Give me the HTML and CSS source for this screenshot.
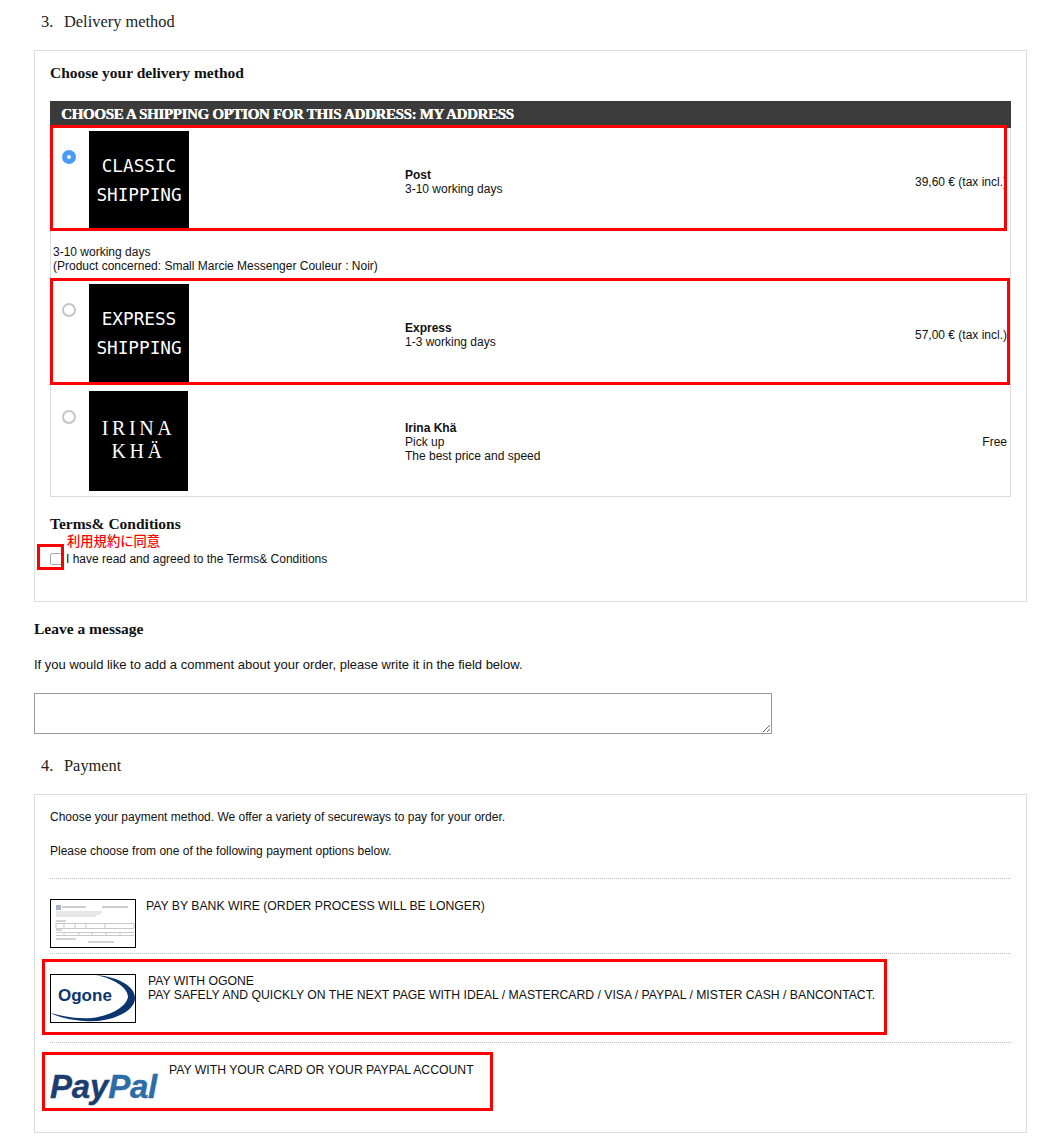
FILE: index.html
```html
<!DOCTYPE html>
<html lang="en">
<head>
<meta charset="utf-8">
<title>Checkout</title>
<link rel="stylesheet" href="styles.css">
</head>
<body>
<main class="page">
  <h2 class="step step-first"><span class="step-num">3.</span>Delivery method</h2>
  <section class="panel panel-delivery">
    <h3 class="title">Choose your delivery method</h3>
    <div class="bar">CHOOSE A SHIPPING OPTION FOR THIS ADDRESS: MY ADDRESS</div>
    <div class="list">
      <div class="option">
        <input class="radio" type="radio" name="ship" checked>
        <div class="thumb thumb-mono"><span>CLASSIC</span><span>SHIPPING</span></div>
        <div class="desc"><strong>Post</strong><span>3-10 working days</span></div>
        <div class="price">39,60 € (tax incl.)</div>
        <div class="mark mark-classic"></div>
      </div>
      <div class="note">3-10 working days<br>(Product concerned: Small Marcie Messenger Couleur : Noir)</div>
      <div class="option">
        <input class="radio" type="radio" name="ship">
        <div class="thumb thumb-mono"><span>EXPRESS</span><span>SHIPPING</span></div>
        <div class="desc"><strong>Express</strong><span>1-3 working days</span></div>
        <div class="price">57,00 € (tax incl.)</div>
        <div class="mark mark-express"></div>
      </div>
      <div class="option">
        <input class="radio" type="radio" name="ship">
        <div class="thumb thumb-serif"><span>IRINA</span><span>KHÄ</span></div>
        <div class="desc"><strong>Irina Khä</strong><span>Pick up</span><span>The best price and speed</span></div>
        <div class="price">Free</div>
      </div>
    </div>
    <h3 class="title title-terms">Terms&amp; Conditions</h3>
    <div class="terms">
      <input class="check" type="checkbox">
      <span>I have read and agreed to the Terms&amp; Conditions</span>
      <span class="jp">利用規約に同意</span>
      <div class="mark mark-check"></div>
    </div>
  </section>

  <h3 class="title title-message">Leave a message</h3>
  <p class="lead">If you would like to add a comment about your order, please write it in the field below.</p>
  <textarea class="comment"></textarea>

  <h2 class="step"><span class="step-num">4.</span>Payment</h2>
  <section class="panel panel-payment">
    <p class="pay-text">Choose your payment method. We offer a variety of secureways to pay for your order.</p>
    <p class="pay-text pay-text-second">Please choose from one of the following payment options below.</p>
    <div class="pay-row pay-bank">
      <svg class="pay-img" width="86" height="49" viewBox="0 0 86 49">
        <rect x=".5" y=".5" width="85" height="48" fill="#fff" stroke="#000"/>
        <rect x="6" y="6" width="5" height="5" fill="#aab0cc"/>
        <path d="M12 8h24M52 8h26" stroke="#999" stroke-width="1"/>
        <path d="M6 13h46M6 15h44M6 17h40" stroke="#ccc" stroke-width="1"/>
        <path d="M6 24.500h78M6 29.500h78M6 33.500h78M6 36.500h78M6 24v5M14 24v5M25 24v5M36 24v5M55 24v5M84 24v5M14 33v4M29 33v4M42 33v4M56 33v4M70 33v4" stroke="#c8c8c8" stroke-width="1" fill="none"/>
        <path d="M6 22h10M6 31h6M6 40h20M38 43h26" stroke="#aaa" stroke-width="1"/>
      </svg>
      <div class="pay-label">PAY BY BANK WIRE (ORDER PROCESS WILL BE LONGER)</div>
    </div>
    <div class="pay-row pay-ogone">
      <svg class="pay-img" width="86" height="49" viewBox="0 0 86 49">
        <rect x=".5" y=".5" width="85" height="48" fill="#fff"/>
        <path d="M46 1C70 3 85 13 85 24C85 38 60 49 35 47C20 46 8 43 1 39C14 43 30 45 42 44C58 42 76 34 78 23C78 13 62 4 46 1Z" fill="#0b356f"/>
        <text class="ogone-word" x="8" y="27">Ogone</text>
        <rect x=".5" y=".5" width="85" height="48" fill="none" stroke="#000"/>
      </svg>
      <div class="pay-label">PAY WITH OGONE<br>PAY SAFELY AND QUICKLY ON THE NEXT PAGE WITH IDEAL / MASTERCARD / VISA / PAYPAL / MISTER CASH / BANCONTACT.</div>
      <div class="mark mark-ogone"></div>
    </div>
    <div class="pay-row pay-paypal">
      <div class="paypal"><span class="pp-dark">Pay</span><span class="pp-light">Pal</span></div>
      <div class="pay-label">PAY WITH YOUR CARD OR YOUR PAYPAL ACCOUNT</div>
      <div class="mark mark-paypal"></div>
    </div>
  </section>
</main>
</body>
</html>
```

FILE: styles.css
```css
* { box-sizing: border-box; }
html, body { margin: 0; padding: 0; background: #fff; }
body { font-family: "Liberation Sans", Arial, sans-serif; font-size: 12px; line-height: 14px; color: #111; }
.page { width: 993px; margin-left: 34px; }

.step { margin: 0; height: 60px; padding: 22px 0 0 7px; font: 400 16.4px/20px "Liberation Serif", serif; color: #222; display: flex; }
.step-first { height: 50px; padding-top: 12px; }
.step-num { width: 23px; }

.panel { border: 1px solid #ddd; }
.panel-delivery { height: 552px; padding: 14px 15px 0; }
.panel-payment { height: 339px; padding: 15px 15px 0; }

.title { margin: 0; height: 16px; font: 700 15.5px/16px "Liberation Serif", serif; color: #111; }
.title-terms { margin-top: 19px; }
.title-message { margin-top: 19px; }

.bar { margin-top: 20px; height: 27px; background: #3b3b3b; color: #fff; padding-left: 11px; font: 700 15px/27px "Liberation Serif", serif; letter-spacing: -.33px; text-shadow: .4px 0 0 #fff; white-space: nowrap; }

.list { border: 1px solid #ddd; border-top: 0; padding-bottom: 1px; }
.option { position: relative; display: grid; grid-template-columns: 38px 316px 1fr auto; align-items: center; padding: 3px 3px 4px 0; height: 107px; }
.radio { appearance: none; -webkit-appearance: none; margin: 19px 0 0 11px; width: 14px; height: 14px; border: 2px solid #c4c4c4; border-radius: 50%; background: #fff; align-self: start; }
.radio:checked { border: 5px solid #4a9bf5; }

.thumb { width: 100px; height: 100px; background: #000; color: #fff; display: flex; flex-direction: column; align-items: center; justify-content: center; }
.thumb-mono { font: 17.7px/29px "DejaVu Sans Mono", monospace; padding-bottom: 1px; }
.thumb-serif { width: 99px; font: 20px/23px "Liberation Serif", serif; letter-spacing: 3.6px; padding-bottom: 3px; }

.desc { display: flex; flex-direction: column; padding-top: 2px; }
.desc strong { font-weight: 700; }
.price { white-space: nowrap; padding-top: 2px; }

.note { padding: 10px 2px 8px; height: 46px; }

.terms { position: relative; margin-top: 20px; height: 14px; display: flex; align-items: center; gap: 4px; }
.check { appearance: none; -webkit-appearance: none; margin: 0; width: 12px; height: 12px; border: 1px solid #aaa; border-radius: 2px; background: #fff; }
.jp { position: absolute; left: 17px; top: -21px; color: #f00; font: 500 13.3px/20px "Noto Sans CJK JP", sans-serif; }

.mark { position: absolute; border: 3px solid #f00; pointer-events: none; }
.mark-classic { left: -1px; top: -3px; width: 957px; height: 106px; }
.mark-express { left: -1px; top: -3px; width: 960px; height: 107px; }
.mark-check { left: -13px; top: -8px; width: 27px; height: 26px; }
.mark-ogone { left: -8px; top: 5px; width: 845px; height: 76px; }
.mark-paypal { left: -8px; top: 9px; width: 451px; height: 59px; }

.lead { margin: 20px 0 0; font-size: 13px; line-height: 16px; }
.comment { display: block; margin: 20px 0 0; width: 738px; height: 41px; border: 1px solid #999; background: #fff; padding: 2px; }

.pay-text { margin: 0; }
.pay-text-second { margin-top: 20px; }

.pay-row { position: relative; display: flex; align-items: flex-start; border-top: 1px dotted #bbb; padding-top: 19px; }
.pay-bank { margin-top: 20px; height: 75px; gap: 10px; }
.pay-ogone { height: 89px; gap: 12px; }
.pay-paypal { gap: 11px; }
.pay-img { display: block; margin-top: 1px; flex: none; }
.pay-label { white-space: nowrap; font-size: 12.23px; padding-top: 1px; }
.ogone-word { font: 700 17px "Liberation Sans", sans-serif; fill: #0b356f; }

.paypal { margin-top: 7px; width: 108px; font: italic 700 33px/36px "Liberation Sans", sans-serif; letter-spacing: -.2px; flex: none; -webkit-text-stroke: .4px currentColor; }
.pp-dark { color: #1b3d70; }
.pp-light { color: #2c6da8; }
```
